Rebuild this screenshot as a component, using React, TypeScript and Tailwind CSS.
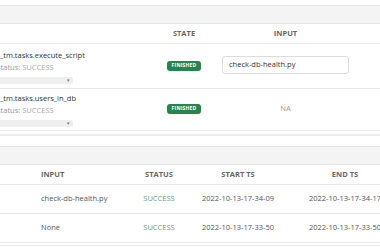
const font = { fontFamily: '"Open Sans", "Noto Sans", sans-serif' };

const tasks = [
  { name: "_tm.tasks.execute_script", input: "check-db-health.py", box: true },
  { name: "_tm.tasks.users_in_db", input: "NA", box: false },
];

const runs = [
  { input: "check-db-health.py", status: "SUCCESS", start: "2022-10-13-17-34-09", end: "2022-10-13-17-34-17" },
  { input: "None", status: "SUCCESS", start: "2022-10-13-17-33-50", end: "2022-10-13-17-33-50" },
];

function Badge() {
  return (
    <span className="inline-flex h-[10px] w-[34px] items-center justify-center rounded-[3px] bg-[#23864f] text-[5px] font-bold tracking-[0.2px] text-white">
      FINISHED
    </span>
  );
}

function Select() {
  return (
    <div className="flex h-[7px] w-[100px] items-center justify-end rounded-[2px] bg-[#efefef] pr-[3px] text-[5px] leading-none text-[#777]">
      ▾
    </div>
  );
}

export default function App() {
  return (
    <div className="h-[250px] w-[380px] overflow-hidden bg-white pt-[5px] text-[7.5px] text-[#444]" style={font}>
      {/* task table */}
      <div className="-ml-[30px]">
        <div className="h-[19px] border-y border-[#e4e4e4] bg-[#f4f4f4]" />
        <div className="grid h-[20px] grid-cols-[186px_56px_147px] items-center border-b border-[#e8e8e8] text-[7.5px] font-bold text-[#666]">
          <div className="pl-[4px]">SCRIPT</div>
          <div className="text-center">STATE</div>
          <div className="text-center">INPUT</div>
        </div>
        {tasks.map((t, i) => (
          <div
            key={t.name}
            className={`grid grid-cols-[186px_56px_147px] items-center border-b border-[#e8e8e8] ${i === 0 ? "h-[45px]" : "h-[42px]"}`}
          >
            <div className="flex flex-col pl-[30px]">
              <div className="leading-[12px] text-[#333]">{t.name}</div>
              <div className="-ml-[3px] leading-[12px] text-[#999]">
                status: <span className="text-[#aaa]">SUCCESS</span>
              </div>
              <div className="-ml-[27px] mt-[4px]">
                <Select />
              </div>
            </div>
            <div className="flex justify-center pb-[1px]">
              <Badge />
            </div>
            <div className="flex justify-center pb-[2px]">
              {t.box ? (
                <div className="flex h-[18px] w-[127px] items-center rounded-[3px] border border-[#dcdcdc] pl-[6px] text-[#333]">
                  {t.input}
                </div>
              ) : (
                <span className="text-[#999]">{t.input}</span>
              )}
            </div>
          </div>
        ))}
      </div>
      <div className="mt-[3px] h-[2px] bg-[#ececec]" />

      {/* run history */}
      <div className="mt-[10px] h-[19px] border-y border-[#e4e4e4] bg-[#f4f4f4]" />
      <div className="grid h-[20px] grid-cols-[41px_80px_76px_82px_132px] items-center border-b border-[#e8e8e8] text-[7.5px] font-bold text-[#666]">
        <div />
        <div>INPUT</div>
        <div className="text-center">STATUS</div>
        <div className="text-center">START TS</div>
        <div className="text-center">END TS</div>
      </div>
      {runs.map((r) => (
        <div
          key={r.start}
          className="grid h-[29px] grid-cols-[41px_80px_76px_82px_132px] items-center border-b border-[#e8e8e8] text-[#555]"
        >
          <div />
          <div>{r.input}</div>
          <div className="text-center text-[#6a9c86]">{r.status}</div>
          <div className="whitespace-nowrap text-center">{r.start}</div>
          <div className="whitespace-nowrap text-center">{r.end}</div>
        </div>
      ))}
      <div className="mt-[2px] h-px bg-[#e8e8e8]" />
    </div>
  );
}
